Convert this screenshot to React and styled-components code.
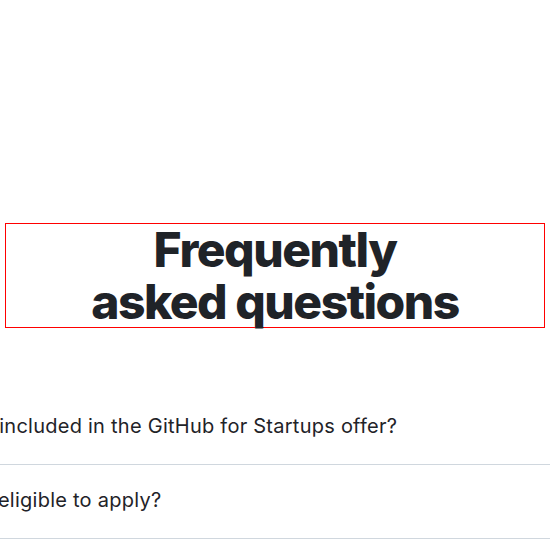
import React from "react";
import styled, { createGlobalStyle } from "styled-components";

const GlobalStyle = createGlobalStyle`
  html, body {
    margin: 0;
    padding: 0;
    background: #ffffff;
    overflow-x: hidden;
  }
  body {
    font-family: Inter, "Liberation Sans", sans-serif;
    color: #1f2328;
  }
`;

const questions = [
  "What's included in the GitHub for Startups offer?",
  "Who is eligible to apply?",
];

const App = () => {
  return (
    <>
      <GlobalStyle />
      <Section>
        <HeadingWrap>
          <Heading>
            Frequently
            <br />
            asked questions
          </Heading>
        </HeadingWrap>
        <List>
          {questions.map((q) => (
            <Row key={q}>
              <Question>{q}</Question>
            </Row>
          ))}
        </List>
      </Section>
    </>
  );
};

const Section = styled.section`
  padding-top: 223px;
`;

const HeadingWrap = styled.div`
  padding: 0 5px;
`;

const Heading = styled.h2`
  margin: 0;
  border: 1px solid #ff0000;
  text-align: center;
  font-family: Inter, "Liberation Sans", sans-serif;
  font-weight: 800;
  font-size: 48px;
  line-height: 51.5px;
  letter-spacing: -1.5px;
  color: #1f2328;
`;

const List = styled.div`
  margin-top: 63px;
  display: flex;
  flex-direction: column;
`;

const Row = styled.div`
  display: flex;
  align-items: center;
  padding: 21px 0 24px;
  border-bottom: 1px solid #d0d7de;
`;

const Question = styled.h3`
  margin: 0;
  white-space: nowrap;
  text-indent: -74px;
  font-size: 20px;
  line-height: 28px;
  letter-spacing: 0.25px;
  font-weight: 400;
  color: #1f2328;
`;

export default App;
